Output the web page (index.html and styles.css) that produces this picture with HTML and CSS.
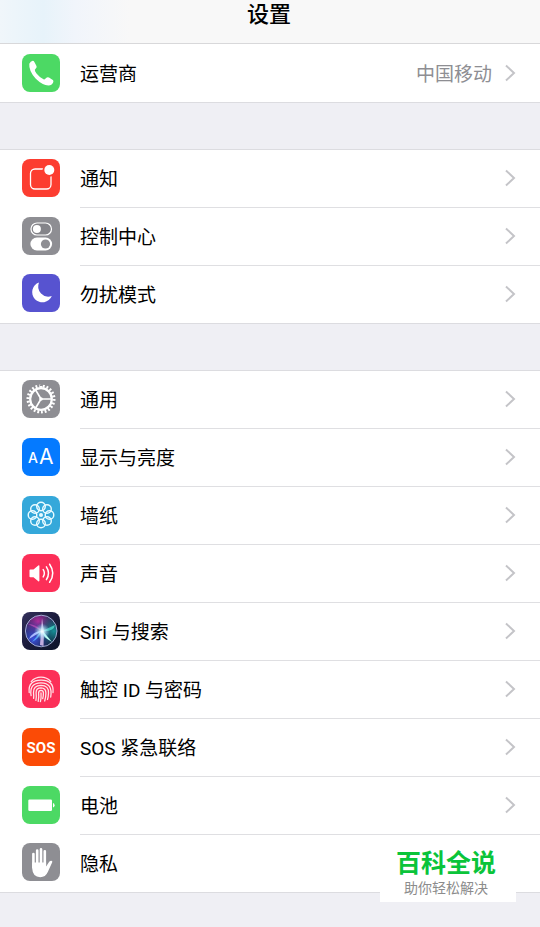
FILE: index.html
```html
<!DOCTYPE html>
<html lang="zh-CN">
<head>
<meta charset="utf-8">
<meta name="viewport" content="width=device-width, initial-scale=1">
<title>设置</title>
<link rel="stylesheet" href="styles.css">
</head>
<body>
<svg class="defs" aria-hidden="true">
  <defs>
    <symbol id="chevron" viewBox="0 0 12 18"><path d="M2 1.5L10 9L2 16.5" fill="none" stroke="currentColor" stroke-width="2"/></symbol>
    <linearGradient id="siri-bg" x1="0" y1="0" x2="1" y2="1"><stop offset="0" stop-color="#34305c"/><stop offset=".5" stop-color="#1b1c3c"/><stop offset="1" stop-color="#0b1428"/></linearGradient>
    <radialGradient id="siri-pink" cx=".4" cy=".2" r=".55"><stop offset="0" stop-color="#b02c9c"/><stop offset="1" stop-color="#7a2a98" stop-opacity="0"/></radialGradient>
    <radialGradient id="siri-blue" cx=".25" cy=".75" r=".6"><stop offset="0" stop-color="#3a50e0"/><stop offset="1" stop-color="#3046b0" stop-opacity="0"/></radialGradient>
    <radialGradient id="siri-teal" cx=".9" cy=".5" r=".55"><stop offset="0" stop-color="#168f96"/><stop offset="1" stop-color="#126478" stop-opacity="0"/></radialGradient>
    <radialGradient id="siri-glow"><stop offset="0" stop-color="#fff"/><stop offset=".4" stop-color="#c8f4ff" stop-opacity=".7"/><stop offset="1" stop-color="#8fd8ff" stop-opacity="0"/></radialGradient>
  </defs>
</svg>

<header class="navbar"><h1 class="navbar-title">设置</h1></header>

<main class="settings">
  <ul class="group group-first">
    <li class="item"><a class="row" href="#carrier">
      <svg class="icon green" viewBox="0 0 38 38" aria-hidden="true"><path fill="#fff" d="M7.3 9.8Q8.5 7.3 10.7 6.8Q11.8 6.8 12.5 8.2L14.5 12Q15 13.3 14 14.3L12.8 15.7Q12.6 16.8 14.5 19.5Q18 23.8 21.5 25.3Q22.6 25.6 23.3 24.8L24.8 23.6Q25.9 23 27 23.6L30.8 26Q31.9 26.9 31.2 28.3Q29.8 31.5 26.5 31.6Q20.5 31.3 13.8 24.8Q6.6 17 7.3 9.8Z"/></svg>
      <span class="body"><span class="label">运营商</span><span class="value">中国移动</span><svg class="chevron" aria-hidden="true"><use href="#chevron"/></svg></span></a></li>
  </ul>

  <ul class="group">
    <li class="item"><a class="row" href="#notifications">
      <svg class="icon red" viewBox="0 0 38 38" aria-hidden="true"><rect x="8.5" y="10" width="20.5" height="20" rx="4.5" fill="none" stroke="#fff" stroke-width="1.3"/><circle cx="27.3" cy="11" r="6.8" fill="#fc3d30"/><circle cx="27.3" cy="11" r="5" fill="#fff"/></svg>
      <span class="body"><span class="label">通知</span><svg class="chevron" aria-hidden="true"><use href="#chevron"/></svg></span></a></li>
    <li class="item"><a class="row" href="#control-center">
      <svg class="icon gray" viewBox="0 0 38 38" aria-hidden="true"><rect x="9" y="6" width="20.5" height="12" rx="6" fill="#848489" stroke="#fff" stroke-width="1.2"/><circle cx="14.9" cy="12" r="4" fill="#fff"/><rect x="8.4" y="20.5" width="21.7" height="13" rx="6.5" fill="#fff"/><circle cx="23.5" cy="27" r="4.6" fill="#8e8e93"/></svg>
      <span class="body"><span class="label">控制中心</span><svg class="chevron" aria-hidden="true"><use href="#chevron"/></svg></span></a></li>
    <li class="item"><a class="row" href="#do-not-disturb">
      <svg class="icon indigo" viewBox="0 0 38 38" aria-hidden="true"><path fill="#fff" d="M17 8.5A10.2 10.2 0 1 0 29.8 22A10.2 10.2 0 0 1 17 8.5Z"/></svg>
      <span class="body"><span class="label">勿扰模式</span><svg class="chevron" aria-hidden="true"><use href="#chevron"/></svg></span></a></li>
  </ul>

  <ul class="group">
    <li class="item"><a class="row" href="#general">
      <svg class="icon gray" viewBox="0 0 38 38" aria-hidden="true"><g fill="none" stroke="#fff"><circle cx="19" cy="19" r="13" stroke-width="3" pathLength="44" stroke-dasharray="1 1"/><circle cx="19" cy="19" r="10.8" stroke-width="2.2"/><path stroke-width="1.7" d="M19 19H30M19 19L13.3 9.4M19 19L13.3 28.6"/></g><circle cx="19" cy="19" r="1.8" fill="#fff"/></svg>
      <span class="body"><span class="label">通用</span><svg class="chevron" aria-hidden="true"><use href="#chevron"/></svg></span></a></li>
    <li class="item"><a class="row" href="#display">
      <svg class="icon blue" viewBox="0 0 38 38" aria-hidden="true"><text class="letter-small" x="6" y="25">A</text><text class="letter-large" x="17" y="26">A</text></svg>
      <span class="body"><span class="label">显示与亮度</span><svg class="chevron" aria-hidden="true"><use href="#chevron"/></svg></span></a></li>
    <li class="item"><a class="row" href="#wallpaper">
      <svg class="icon sky" viewBox="0 0 38 38" aria-hidden="true"><g fill="none" stroke="#e9fbff" stroke-width="1.4"><circle cx="19" cy="10.5" r="4.3"/><circle cx="25" cy="13" r="4.3"/><circle cx="27.5" cy="19" r="4.3"/><circle cx="25" cy="25" r="4.3"/><circle cx="19" cy="27.5" r="4.3"/><circle cx="13" cy="25" r="4.3"/><circle cx="10.5" cy="19" r="4.3"/><circle cx="13" cy="13" r="4.3"/></g><circle cx="19" cy="19" r="2" fill="#e9fbff"/></svg>
      <span class="body"><span class="label">墙纸</span><svg class="chevron" aria-hidden="true"><use href="#chevron"/></svg></span></a></li>
    <li class="item"><a class="row" href="#sounds">
      <svg class="icon pink" viewBox="0 0 38 38" aria-hidden="true"><path fill="#fff" d="M8.3 15.5H11.5L16.3 11.4Q17.4 10.8 17.4 12V26.6Q17.4 27.8 16.3 27.2L11.5 23.2H8.3Q7.5 23.2 7.5 22.4V16.3Q7.5 15.5 8.3 15.5Z"/><path fill="none" stroke="#fff" stroke-width="1.5" stroke-linecap="round" d="M21.2 15.6Q23.6 19.2 21.2 22.9M24.4 12.9Q28.6 19.2 24.4 25.7M27.6 10.2Q34 19.2 27.6 28.3"/></svg>
      <span class="body"><span class="label">声音</span><svg class="chevron" aria-hidden="true"><use href="#chevron"/></svg></span></a></li>
    <li class="item"><a class="row" href="#siri">
      <svg class="icon" viewBox="0 0 38 38" aria-hidden="true"><rect width="38" height="38" fill="url(#siri-bg)"/><circle cx="19.2" cy="19" r="15.8" fill="url(#siri-pink)"/><circle cx="19.2" cy="19" r="15.8" fill="url(#siri-blue)"/><circle cx="19.2" cy="19" r="15.8" fill="url(#siri-teal)"/><path d="M20 19L7 27Q11 19 20 19Z" fill="#a8b8ff"/><path d="M20 19L6 12Q14 12 20 19Z" fill="#d651c2" opacity=".6"/><path d="M20 19L33 13Q32 20 20 19Z" fill="#4fe0cf" opacity=".75"/><path d="M20 18L30 30Q20 25 20 18Z" fill="#b9fff1"/><path d="M19 19L20 6L22 20L21.5 34L18 33Z" fill="#f5d5ff" opacity=".75"/><path d="M20 18L10 30Q17 27 20 18Z" fill="#59b7ff" opacity=".8"/><circle cx="20" cy="19.5" r="8" fill="url(#siri-glow)"/><circle cx="19.2" cy="19" r="15.8" fill="none" stroke="#aeb8df" stroke-width=".9"/></svg>
      <span class="body"><span class="label">Siri 与搜索</span><svg class="chevron" aria-hidden="true"><use href="#chevron"/></svg></span></a></li>
    <li class="item"><a class="row" href="#touch-id">
      <svg class="icon pink" viewBox="0 0 38 38" aria-hidden="true"><g fill="none" stroke="#ffe4e9" stroke-width="1.3" stroke-linecap="round"><path d="M9.2 11.6Q13 7.2 19 7.2T28.8 11.6"/><path d="M7.2 22.5Q5.8 10.2 19 10.1Q32.3 10.2 31 22.5"/><path d="M9.1 25.6Q7 12.9 19 12.8Q31 12.9 28.7 27"/><path d="M11.6 28.4Q11.9 26 11.5 22.5Q11.2 15.5 19 15.4Q26.9 15.5 26.5 23Q26.3 27 25.5 29.5"/><path d="M13.9 30.4Q14.6 27.5 14.1 22.5Q14.1 18 19 17.9Q23.9 18 23.9 23Q23.9 27.5 22.7 31"/><path d="M16.2 31.3Q17.1 27.5 16.6 23Q16.7 20.5 19 20.4Q21.3 20.5 21.4 23Q21.5 26 20.7 28.7"/><path d="M19 23Q19.4 28 18.4 31.7"/></g></svg>
      <span class="body"><span class="label">触控 ID 与密码</span><svg class="chevron" aria-hidden="true"><use href="#chevron"/></svg></span></a></li>
    <li class="item"><a class="row" href="#sos">
      <svg class="icon orange" viewBox="0 0 38 38" aria-hidden="true"><text class="letter-sos" x="19" y="25" text-anchor="middle">SOS</text></svg>
      <span class="body"><span class="label">SOS 紧急联络</span><svg class="chevron" aria-hidden="true"><use href="#chevron"/></svg></span></a></li>
    <li class="item"><a class="row" href="#battery">
      <svg class="icon green" viewBox="0 0 38 38" aria-hidden="true"><rect x="6.3" y="13.5" width="23.7" height="11.5" rx="1.2" fill="#fff"/><path fill="#fff" d="M31 17Q32.6 17.6 32.6 19.3T31 21.6Z"/></svg>
      <span class="body"><span class="label">电池</span><svg class="chevron" aria-hidden="true"><use href="#chevron"/></svg></span></a></li>
    <li class="item"><a class="row" href="#privacy">
      <svg class="icon gray" viewBox="0 0 38 38" aria-hidden="true"><g fill="none" stroke="#fff" stroke-width="2.6" stroke-linecap="round"><path d="M11.4 11V24M15.2 7.5V22M19 6.3V22M22.8 8.3V22"/></g><path fill="#fff" d="M10.1 19.5H24.1V23.5L27.2 18.8Q28.6 17.2 30 17.9Q30.7 18.5 30 19.8L25.8 29Q23.6 34.2 18.2 34.2Q10.7 34.2 10.1 25Z"/></svg>
      <span class="body"><span class="label">隐私</span><svg class="chevron" aria-hidden="true"><use href="#chevron"/></svg></span></a></li>
  </ul>
  <aside class="badge"><strong class="badge-title">百科全说</strong><span class="badge-note">助你轻松解决</span></aside>
</main>
</body>
</html>
```
FILE: styles.css
```css
* {
  box-sizing: border-box;
}

body {
  margin: 0;
  min-height: 100vh;
  background: #efeff4;
  color: #000;
  font-family: Roboto, "Noto Sans CJK SC", sans-serif;
  font-size: 19px;
  line-height: 28px;
}

.defs {
  position: absolute;
  width: 0;
  height: 0;
}

.navbar {
  height: 44px;
  border-bottom: 1px solid #d8d8da;
  background: linear-gradient(90deg, #f0f6fa 0, #e7f3fa 8%, #f1f5fb 14%, #f8f8f8 24%);
  text-align: center;
}

.navbar-title {
  margin: 0;
  padding-right: 2px;
  font-size: 22px;
  font-weight: 500;
  line-height: 30px;
}

.settings {
  position: relative;
  padding-bottom: 34px;
}

.group {
  margin: 0 0 46px;
  padding: 0;
  border: solid #dcdce0;
  border-width: 1px 0;
  background: #fff;
  list-style: none;
}

.group:last-of-type {
  margin-bottom: 0;
}

.group-first {
  border-top: 0;
}

.row {
  display: flex;
  align-items: center;
  height: 58px;
  padding-left: 22px;
  color: inherit;
  text-decoration: none;
}

.item:last-child .row {
  height: 57px;
}

.group-first .item:last-child .row {
  height: 58px;
}

.icon {
  flex: none;
  width: 38px;
  height: 38px;
  margin-right: 20px;
  margin-bottom: 3px;
  border-radius: 8px;
}

.body {
  display: flex;
  flex: 1;
  align-items: center;
  align-self: stretch;
  padding-right: 24px;
  border-bottom: 1px solid #dfdfe2;
}

.item:last-child .body {
  border-bottom: 0;
}

.label {
  flex: 1;
  padding-top: 2px;
}

.value {
  margin-right: 12px;
  padding-top: 2px;
  color: #8e8e93;
}

.chevron {
  width: 12px;
  height: 18px;
  margin-bottom: 2px;
  color: #c4c4c8;
}

.group-first .icon,
.group-first .chevron {
  margin-bottom: 0;
}

.group-first .label,
.group-first .value {
  padding-top: 4px;
}

.green { background: #4cd964; }
.red { background: #fc3d30; }
.gray { background: #8e8e93; }
.indigo { background: #5753d0; }
.blue { background: #057aff; }
.sky { background: #35a8da; }
.pink { background: #fc2f58; }
.orange { background: #fb4b06; }

.letter-small,
.letter-large {
  fill: #fff;
  font-family: Inter, sans-serif;
}

.letter-small {
  font-size: 14px;
  font-weight: 500;
}

.letter-large {
  font-size: 21px;
}

.letter-sos {
  fill: #fff;
  font-family: Roboto, sans-serif;
  font-size: 15px;
  font-weight: 700;
}

.badge {
  position: absolute;
  right: 24px;
  bottom: 25px;
  display: flex;
  flex-direction: column;
  align-items: center;
  width: 136px;
  padding: 0 4px 4px 0;
  background: #fff;
}

.badge-title {
  color: #0ac43a;
  font-size: 25px;
  font-weight: 700;
  line-height: 28px;
}

.badge-note {
  color: #8c8c8c;
  font-size: 14px;
  line-height: 20px;
}
```
